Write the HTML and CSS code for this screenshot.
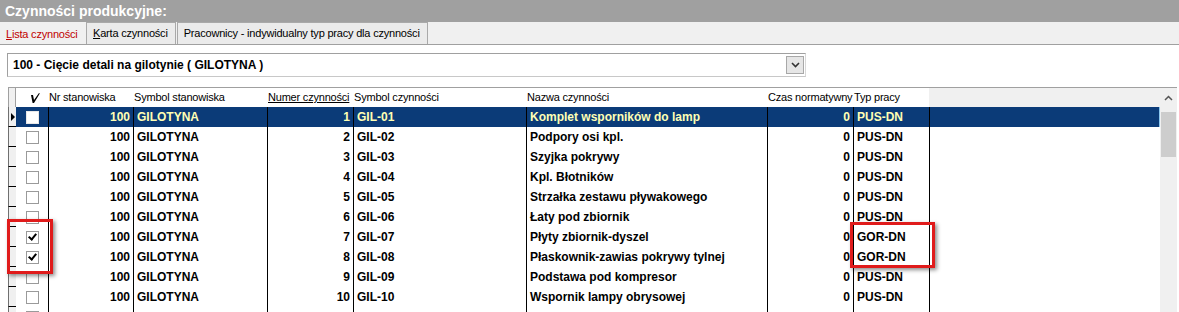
FILE: index.html
```html
<!DOCTYPE html>
<html lang="pl">
<head>
  <meta charset="UTF-8">
  <title>Czynności produkcyjne</title>
  <link rel="stylesheet" href="styles.css">
</head>
<body>

  <div class="titlebar">Czynności produkcyjne:</div>

  <div class="tabs">
    <div class="tab active"><u>L</u>ista czynności</div>
    <div class="tab"><u>K</u>arta czynności</div>
    <div class="tab">Pracownicy - indywidualny typ pracy dla czynności</div>
  </div>

  <div class="content">

    <div class="combo">
      <span class="combo-text">100 - Cięcie detali na gilotynie ( GILOTYNA )</span>
      <span class="combo-btn">
        <svg width="9" height="6" viewBox="0 0 9 6"><path d="M1 1 L4.5 4.5 L8 1" fill="none" stroke="#333" stroke-width="1.6"/></svg>
      </span>
    </div>

    <div class="grid">
      <div class="table">
        <div class="row head">
          <div class="c ind"></div>
          <div class="c chk">
            <svg width="10" height="12" viewBox="0 0 10 12"><path d="M1 3 L3 3 L4 8 L9 1 L9.8 1.6 L4 11 L2.6 11 Z" fill="#000"/></svg>
          </div>
          <div class="c">Nr stanowiska</div>
          <div class="c">Symbol stanowiska</div>
          <div class="c"><u>Numer czynności</u></div>
          <div class="c">Symbol czynności</div>
          <div class="c">Nazwa czynności</div>
          <div class="c">Czas normatywny</div>
          <div class="c">Typ pracy</div>
          <div class="c fill"></div>
        </div>

        <div class="row sel">
          <div class="c ind"><span class="arrow"></span></div>
          <div class="c chk"><span class="box"></span></div>
          <div class="c r">100</div>
          <div class="c">GILOTYNA</div>
          <div class="c r">1</div>
          <div class="c">GIL-01</div>
          <div class="c">Komplet wsporników do lamp</div>
          <div class="c r">0</div>
          <div class="c">PUS-DN</div>
          <div class="c fill"></div>
        </div>
        <div class="row">
          <div class="c ind"></div>
          <div class="c chk"><span class="box"></span></div>
          <div class="c r">100</div>
          <div class="c">GILOTYNA</div>
          <div class="c r">2</div>
          <div class="c">GIL-02</div>
          <div class="c">Podpory osi kpl.</div>
          <div class="c r">0</div>
          <div class="c">PUS-DN</div>
          <div class="c fill"></div>
        </div>
        <div class="row">
          <div class="c ind"></div>
          <div class="c chk"><span class="box"></span></div>
          <div class="c r">100</div>
          <div class="c">GILOTYNA</div>
          <div class="c r">3</div>
          <div class="c">GIL-03</div>
          <div class="c">Szyjka pokrywy</div>
          <div class="c r">0</div>
          <div class="c">PUS-DN</div>
          <div class="c fill"></div>
        </div>
        <div class="row">
          <div class="c ind"></div>
          <div class="c chk"><span class="box"></span></div>
          <div class="c r">100</div>
          <div class="c">GILOTYNA</div>
          <div class="c r">4</div>
          <div class="c">GIL-04</div>
          <div class="c">Kpl. Błotników</div>
          <div class="c r">0</div>
          <div class="c">PUS-DN</div>
          <div class="c fill"></div>
        </div>
        <div class="row">
          <div class="c ind"></div>
          <div class="c chk"><span class="box"></span></div>
          <div class="c r">100</div>
          <div class="c">GILOTYNA</div>
          <div class="c r">5</div>
          <div class="c">GIL-05</div>
          <div class="c">Strzałka zestawu pływakowego</div>
          <div class="c r">0</div>
          <div class="c">PUS-DN</div>
          <div class="c fill"></div>
        </div>
        <div class="row">
          <div class="c ind"></div>
          <div class="c chk"><span class="box"></span></div>
          <div class="c r">100</div>
          <div class="c">GILOTYNA</div>
          <div class="c r">6</div>
          <div class="c">GIL-06</div>
          <div class="c">Łaty pod zbiornik</div>
          <div class="c r">0</div>
          <div class="c">PUS-DN</div>
          <div class="c fill"></div>
        </div>
        <div class="row">
          <div class="c ind"></div>
          <div class="c chk"><span class="box checked"></span></div>
          <div class="c r">100</div>
          <div class="c">GILOTYNA</div>
          <div class="c r">7</div>
          <div class="c">GIL-07</div>
          <div class="c">Płyty zbiornik-dyszel</div>
          <div class="c r">0</div>
          <div class="c">GOR-DN</div>
          <div class="c fill"></div>
        </div>
        <div class="row">
          <div class="c ind"></div>
          <div class="c chk"><span class="box checked"></span></div>
          <div class="c r">100</div>
          <div class="c">GILOTYNA</div>
          <div class="c r">8</div>
          <div class="c">GIL-08</div>
          <div class="c">Płaskownik-zawias pokrywy tylnej</div>
          <div class="c r">0</div>
          <div class="c">GOR-DN</div>
          <div class="c fill"></div>
        </div>
        <div class="row">
          <div class="c ind"></div>
          <div class="c chk"><span class="box"></span></div>
          <div class="c r">100</div>
          <div class="c">GILOTYNA</div>
          <div class="c r">9</div>
          <div class="c">GIL-09</div>
          <div class="c">Podstawa pod kompresor</div>
          <div class="c r">0</div>
          <div class="c">PUS-DN</div>
          <div class="c fill"></div>
        </div>
        <div class="row">
          <div class="c ind"></div>
          <div class="c chk"><span class="box"></span></div>
          <div class="c r">100</div>
          <div class="c">GILOTYNA</div>
          <div class="c r">10</div>
          <div class="c">GIL-10</div>
          <div class="c">Wspornik lampy obrysowej</div>
          <div class="c r">0</div>
          <div class="c">PUS-DN</div>
          <div class="c fill"></div>
        </div>
        <div class="row">
          <div class="c ind"></div>
          <div class="c chk"><span class="box"></span></div>
          <div class="c r"></div>
          <div class="c"></div>
          <div class="c r"></div>
          <div class="c"></div>
          <div class="c"></div>
          <div class="c r"></div>
          <div class="c"></div>
          <div class="c fill"></div>
        </div>
      </div>

      <div class="vscroll">
        <div class="sb-up">
          <svg width="9" height="6" viewBox="0 0 9 6"><path d="M1 5 L4.5 1.5 L8 5" fill="none" stroke="#555" stroke-width="1.5"/></svg>
        </div>
        <div class="sb-thumb"></div>
      </div>
    </div>

  </div>

  <!-- annotation frames -->
  <div class="mark mark-check"></div>
  <div class="mark mark-type"></div>

</body>
</html>
```

FILE: styles.css
```css
body {
  margin: 0;
  font-family: "Liberation Sans", Arial, sans-serif;
  background: #fff;
  color: #000;
  overflow: hidden;
}

.titlebar {
  height: 22px;
  line-height: 22px;
  background: #a0a0a0;
  color: #fff;
  font-size: 14px;
  font-weight: bold;
  padding-left: 5px;
}

.tabs {
  height: 22px;
  background: #f0f0f0;
  border-bottom: 1px solid #a0a0a0;
  display: flex;
  align-items: flex-end;
}

.tab {
  height: 21px;
  line-height: 21px;
  font-size: 11px;
  letter-spacing: -0.2px;
  padding: 0 7px 0 6px;
  background: #ebebeb;
  border: 1px solid #a9a9a9;
  border-bottom: none;
  margin-left: 1px;
}

.tab.active {
  box-sizing: border-box;
  width: 85px;
  background: transparent;
  border-color: transparent;
  color: #c00000;
  padding: 0 0 0 5px;
  margin-left: 0;
}

.content {
  padding: 8px 2px 0 8px;
}

.combo {
  width: 797px;
  height: 22px;
  border: 1px solid #a0a0a0;
  border-right-color: #d8d8d8;
  border-bottom-color: #c8c8c8;
  margin-left: -1px;
  display: flex;
  align-items: center;
  justify-content: space-between;
}

.combo-text {
  font-size: 12px;
  font-weight: bold;
  padding-left: 5px;
}

.combo-btn {
  width: 16px;
  height: 16px;
  margin-right: 1px;
  border: 1px solid #a8a8a8;
  background: #e6e6e6;
  display: flex;
  align-items: center;
  justify-content: center;
}

.grid {
  margin-top: 10px;
  border-top: 1px solid #a0a0a0;
  display: flex;
  height: 226px;
  overflow: hidden;
}

.table {
  flex: 1;
}

.row {
  display: grid;
  grid-template-columns: 8px 32px 85px 134px 86px 173px 241px 86px 76px 1fr;
  height: 20px;
  font-size: 12px;
  font-weight: bold;
  line-height: 20px;
}

.c {
  box-sizing: border-box;
  white-space: nowrap;
  overflow: hidden;
  padding: 0 3px;
  border-left: 1px solid #000;
}

.c.r {
  text-align: right;
}

.c.ind {
  padding: 0;
  background: #f0f0f0;
  border-left: 1px solid #707070;
  border-bottom: 1px solid #000;
  display: flex;
  align-items: center;
  justify-content: flex-end;
}

.c.chk {
  border-left: none;
  display: flex;
  align-items: center;
  justify-content: center;
  padding: 0;
}

.c.fill {
  padding: 0;
}

.row.head {
  height: 19px;
  line-height: 19px;
  font-size: 11px;
  letter-spacing: -0.2px;
  font-weight: normal;
}

.row.head .c {
  border-left: none;
  padding: 0 1px;
  overflow: visible;
}

.row.head .c.ind {
  border-left: 1px solid #a0a0a0;
  border-right: 1px solid #a0a0a0;
  border-bottom: none;
}

.row.head .c.chk {
  justify-content: flex-start;
  padding-left: 14px;
}

.row.head .c.fill {
  background: #f0f0f0;
}

.row.sel .c {
  background: #0b3b78;
  color: #ffffb4;
}

.row.sel .c.ind {
  background: #f0f0f0;
}

.row.sel .c.fill {
  border-right: 1px solid #8cc8f0;
}

.arrow {
  width: 0;
  height: 0;
  border-top: 4px solid transparent;
  border-bottom: 4px solid transparent;
  border-left: 4px solid #000;
  margin-right: 1px;
}

.box {
  width: 11px;
  height: 11px;
  border: 1px solid #9a9a9a;
  background: #fff;
  position: relative;
}

.row.sel .box {
  border-color: #e8e8e8;
}

.box.checked::after {
  content: "";
  position: absolute;
  left: 3px;
  top: 0px;
  width: 3px;
  height: 6px;
  border: solid #000;
  border-width: 0 2px 2px 0;
  transform: rotate(40deg);
}

.vscroll {
  width: 17px;
  background: #f0f0f0;
}

.sb-up {
  height: 19px;
  display: flex;
  align-items: center;
  justify-content: center;
}

.sb-thumb {
  margin: 5px 0 0 1px;
  width: 15px;
  height: 45px;
  background: #cdcdcd;
}

.mark {
  position: absolute;
  border: 3px solid #e01b1b;
  box-shadow: 2px 2px 4px rgba(0, 0, 0, 0.45);
}

.mark-check {
  left: 7px;
  top: 219px;
  width: 40px;
  height: 49px;
}

.mark-type {
  left: 850px;
  top: 222px;
  width: 79px;
  height: 40px;
}
```
